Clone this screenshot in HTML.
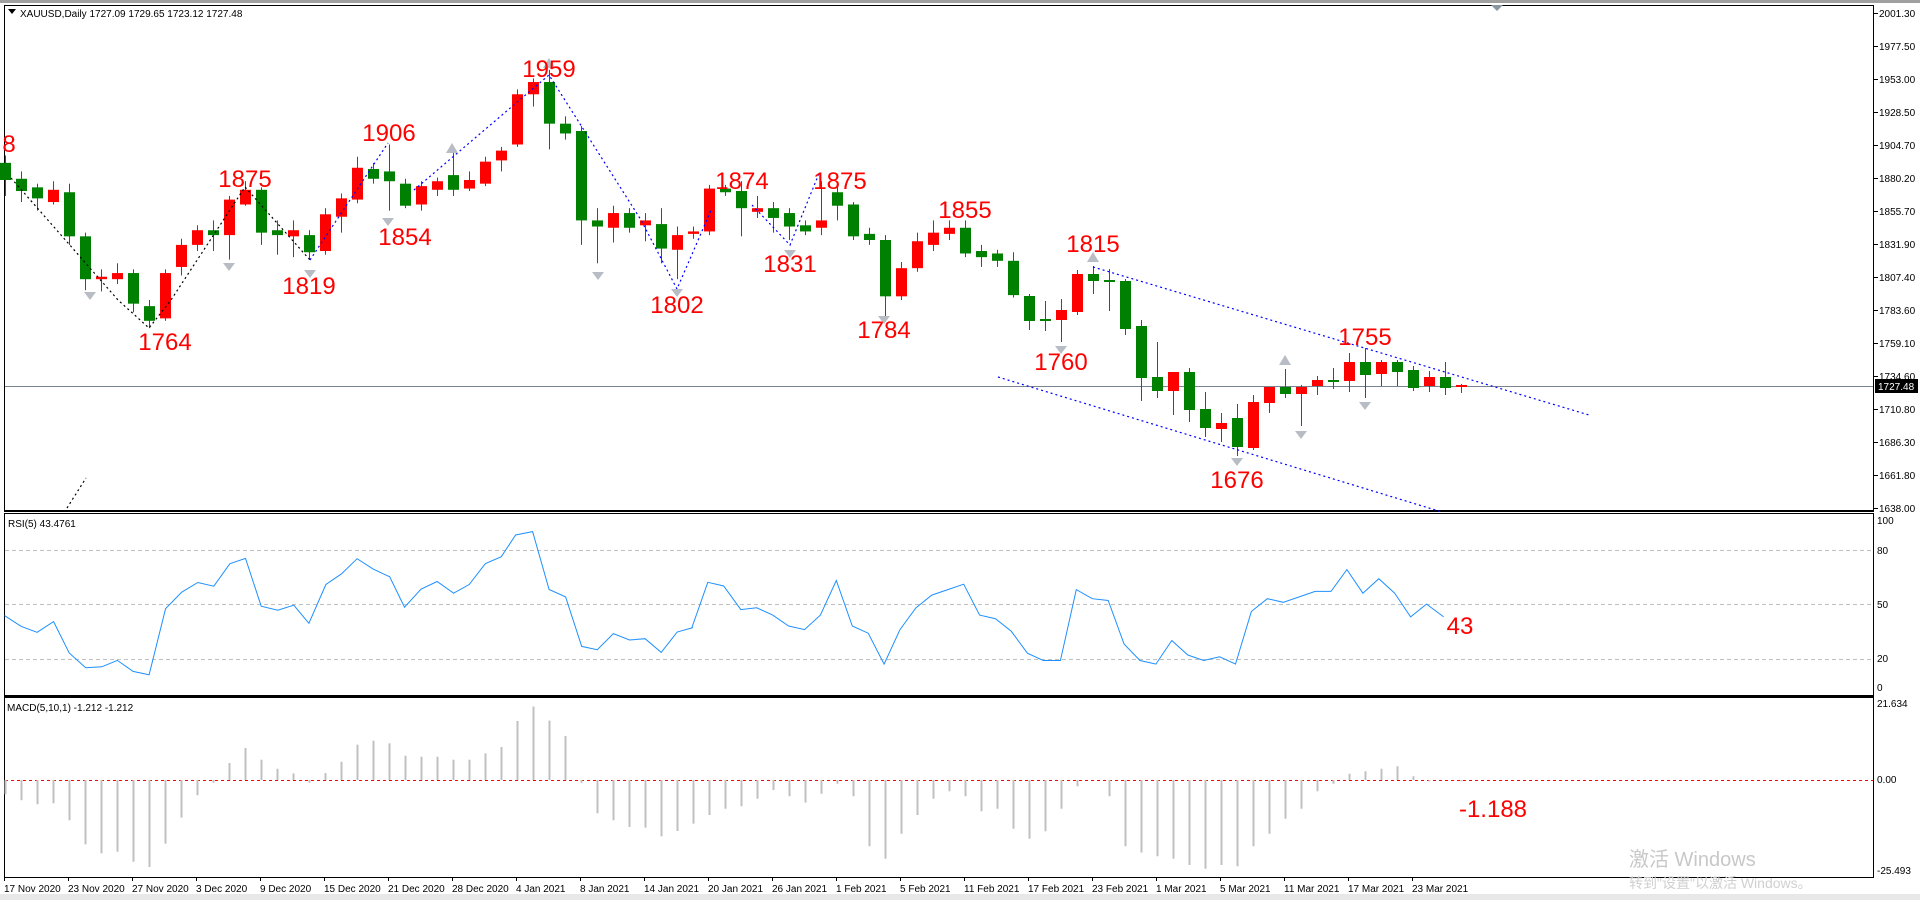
<!DOCTYPE html>
<html><head><meta charset="utf-8"><style>
html,body{margin:0;padding:0;width:1920px;height:900px;overflow:hidden;background:#fff}
svg{display:block}
.ax{font-family:"Liberation Sans",sans-serif;font-size:10px;fill:#000}
.lb{font-family:"Liberation Sans",sans-serif;font-size:24px;fill:#ff0000;text-anchor:middle}
</style></head><body>
<svg id="s" width="1920" height="900" viewBox="0 0 1920 900" xmlns="http://www.w3.org/2000/svg">
<rect x="0" y="0" width="1920" height="900" fill="#fff"/>
<rect x="0" y="0" width="1920" height="3" fill="#a0a0a0"/>
<rect x="0" y="894" width="1920" height="6" fill="#e8e8e8"/>
<rect x="4.5" y="5.5" width="1869" height="505" fill="none" stroke="#000" stroke-width="1"/>
<rect x="4.5" y="513.5" width="1869" height="182" fill="none" stroke="#000" stroke-width="1"/>
<rect x="4.5" y="697.5" width="1869" height="180" fill="none" stroke="#000" stroke-width="1"/>
<line x1="4" y1="511.5" x2="1874" y2="511.5" stroke="#000"/>
<line x1="4" y1="696.5" x2="1874" y2="696.5" stroke="#000"/>
<polygon points="1491,5 1503,5 1497,11" fill="#8a96a0"/>
<g stroke="#c0c0c0" stroke-dasharray="4,3">
<line x1="5" y1="550.5" x2="1873" y2="550.5"/><line x1="5" y1="604.5" x2="1873" y2="604.5"/><line x1="5" y1="659.5" x2="1873" y2="659.5"/></g>
<line x1="5" y1="780.5" x2="1873" y2="780.5" stroke="#ff0000" stroke-dasharray="3,3"/>
<line x1="5" y1="386.5" x2="1873" y2="386.5" stroke="#7a8490"/>
<g id="cand"></g>
<g id="mac"></g>
<polyline id="rsi" fill="none" stroke="#1e90ff" stroke-width="1"/>
<g fill="none" stroke-width="1.2" stroke-dasharray="2,3">
<polyline stroke="#000" points="11,178 118,300 149,328 171,300 245,187 310,260"/>
<polyline stroke="#0000ff" points="310,260 388,143"/>
<polyline stroke="#0000ff" points="414,190 549,75 641,220 677,289 712,208"/>
<polyline stroke="#0000ff" points="752,205 790,245 820,171"/>
<line stroke="#0000ff" x1="1093" y1="267" x2="1589" y2="415"/>
<line stroke="#0000ff" x1="998" y1="377" x2="1442" y2="512"/>
<line stroke="#000" x1="67" y1="508" x2="86" y2="478"/>
</g>
<g fill="#b8bcc4">
<polygon points="84,292 96,292 90,300"/><polygon points="223,263 235,263 229,271"/><polygon points="304,270 316,270 310,278"/><polygon points="382,218 394,218 388,226"/><polygon points="592,272 604,272 598,280"/><polygon points="671,289 683,289 677,297"/><polygon points="784,250 796,250 790,258"/><polygon points="878,316 890,316 884,324"/><polygon points="1055,346 1067,346 1061,354"/><polygon points="1231,458 1243,458 1237,466"/><polygon points="1295,431 1307,431 1301,439"/><polygon points="1359,402 1371,402 1365,410"/>
<polygon points="1093,252 1087,262 1099,262"/><polygon points="1285,355 1279,365 1291,365"/><polygon points="452,143 446,153 458,153"/><polygon points="549,58 543,68 555,68"/></g>
<text class="lb" x="9" y="152">8</text>
<text class="lb" x="245" y="187">1875</text>
<text class="lb" x="389" y="141">1906</text>
<text class="lb" x="549" y="77">1959</text>
<text class="lb" x="742" y="189">1874</text>
<text class="lb" x="840" y="189">1875</text>
<text class="lb" x="965" y="218">1855</text>
<text class="lb" x="1093" y="252">1815</text>
<text class="lb" x="1365" y="345">1755</text>
<text class="lb" x="165" y="350">1764</text>
<text class="lb" x="405" y="245">1854</text>
<text class="lb" x="309" y="294">1819</text>
<text class="lb" x="677" y="313">1802</text>
<text class="lb" x="790" y="272">1831</text>
<text class="lb" x="884" y="338">1784</text>
<text class="lb" x="1061" y="370">1760</text>
<text class="lb" x="1237" y="488">1676</text>
<text class="lb" x="1460" y="634">43</text>
<text class="lb" x="1493" y="817">-1.188</text>
<polygon points="8,9 16,9 12,14" fill="#000"/>
<text class="ax" x="20" y="17">XAUUSD,Daily  1727.09 1729.65 1723.12 1727.48</text>
<text class="ax" x="8" y="527">RSI(5) 43.4761</text>
<text class="ax" x="7" y="711">MACD(5,10,1) -1.212 -1.212</text>
<g class="ax">
<text x="1879" y="17">2001.30</text><text x="1879" y="50">1977.50</text><text x="1879" y="83">1953.00</text><text x="1879" y="116">1928.50</text><text x="1879" y="149">1904.70</text><text x="1879" y="182">1880.20</text><text x="1879" y="215">1855.70</text><text x="1879" y="248">1831.90</text><text x="1879" y="281">1807.40</text><text x="1879" y="314">1783.60</text><text x="1879" y="347">1759.10</text><text x="1879" y="380">1734.60</text><text x="1879" y="413">1710.80</text><text x="1879" y="446">1686.30</text><text x="1879" y="479">1661.80</text><text x="1879" y="512">1638.00</text>
<text x="1877" y="524">100</text><text x="1877" y="554">80</text><text x="1877" y="608">50</text><text x="1877" y="662">20</text><text x="1877" y="691">0</text>
<text x="1877" y="707">21.634</text><text x="1877" y="783">0.00</text><text x="1877" y="874">-25.493</text>
</g>
<g stroke="#000"><line x1="1874" y1="13.5" x2="1878" y2="13.5"/><line x1="1874" y1="46.5" x2="1878" y2="46.5"/><line x1="1874" y1="79.5" x2="1878" y2="79.5"/><line x1="1874" y1="112.5" x2="1878" y2="112.5"/><line x1="1874" y1="145.5" x2="1878" y2="145.5"/><line x1="1874" y1="178.5" x2="1878" y2="178.5"/><line x1="1874" y1="211.5" x2="1878" y2="211.5"/><line x1="1874" y1="244.5" x2="1878" y2="244.5"/><line x1="1874" y1="277.5" x2="1878" y2="277.5"/><line x1="1874" y1="310.5" x2="1878" y2="310.5"/><line x1="1874" y1="343.5" x2="1878" y2="343.5"/><line x1="1874" y1="376.5" x2="1878" y2="376.5"/><line x1="1874" y1="409.5" x2="1878" y2="409.5"/><line x1="1874" y1="442.5" x2="1878" y2="442.5"/><line x1="1874" y1="475.5" x2="1878" y2="475.5"/><line x1="1874" y1="508.5" x2="1878" y2="508.5"/></g>
<rect x="1875" y="379" width="43" height="14" fill="#000"/>
<text x="1878" y="390" class="ax" style="fill:#fff">1727.48</text>
<g class="ax">
<text x="4" y="892">17 Nov 2020</text><text x="68" y="892">23 Nov 2020</text><text x="132" y="892">27 Nov 2020</text><text x="196" y="892">3 Dec 2020</text><text x="260" y="892">9 Dec 2020</text><text x="324" y="892">15 Dec 2020</text><text x="388" y="892">21 Dec 2020</text><text x="452" y="892">28 Dec 2020</text><text x="516" y="892">4 Jan 2021</text><text x="580" y="892">8 Jan 2021</text><text x="644" y="892">14 Jan 2021</text><text x="708" y="892">20 Jan 2021</text><text x="772" y="892">26 Jan 2021</text><text x="836" y="892">1 Feb 2021</text><text x="900" y="892">5 Feb 2021</text><text x="964" y="892">11 Feb 2021</text><text x="1028" y="892">17 Feb 2021</text><text x="1092" y="892">23 Feb 2021</text><text x="1156" y="892">1 Mar 2021</text><text x="1220" y="892">5 Mar 2021</text><text x="1284" y="892">11 Mar 2021</text><text x="1348" y="892">17 Mar 2021</text><text x="1412" y="892">23 Mar 2021</text>
</g>
<g id="dt" stroke="#000"></g>
<text x="1629" y="866" style="font-family:'Liberation Sans','Noto Sans CJK SC',sans-serif;font-size:20px;fill:#c8c8c8">激活 Windows</text>
<text x="1629" y="888" style="font-family:'Liberation Sans','Noto Sans CJK SC',sans-serif;font-size:14px;fill:#d0d0d0">转到"设置"以激活 Windows。</text>
</svg>
<script>
var NS="http://www.w3.org/2000/svg";
function el(p,t,a){var e=document.createElementNS(NS,t);for(var k in a)e.setAttribute(k,a[k]);p.appendChild(e);return e;}
var G="#008000",R="#ff0000";
var A=[[133,147,127,160,G],[146,156,140,165,G],[153,162,150,172,G],[155,165,148,167,R],[157,193,150,200,G],[193,228,190,237,G],[226,228,220,238,R],[223,228,215,232,R],[223,248,220,255,G],[250,262,245,268,G],[223,260,220,262,R],[200,218,195,225,R],[188,200,184,205,R],[188,192,180,205,G],[163,192,160,212,R],[155,167,148,168,R],[155,190,153,200,G],[188,192,180,208,G],[188,193,180,210,R],[192,206,188,212,G],[175,205,170,208,R],[162,177,158,190,R],[137,163,128,166,R],[138,146,133,150,G],[140,148,118,172,G],[150,168,146,170,G],[152,167,148,172,R],[148,155,145,160,R],[143,155,124,160,G],[147,154,140,156,R],[132,150,128,152,R],[123,131,120,140,R],[77,118,73,120,R],[67,77,64,87,R],[67,101,57,122,G],[101,109,95,114,G],[107,180,103,200,G],[180,185,170,215,G],[174,186,168,198,R],[174,186,170,190,G],[180,184,174,197,R],[183,203,170,215,G],[192,204,185,228,R],[189,191,185,195,R],[154,189,151,192,R],[154,157,151,160,G],[156,170,148,193,G],[170,173,160,178,R],[170,178,165,190,G],[174,185,170,196,G],[184,189,180,192,G],[180,186,148,192,R],[157,168,151,180,G],[167,193,165,196,G],[191,196,186,200,G],[196,242,192,260,G],[219,242,214,245,R],[197,219,190,222,R],[190,200,180,205,R],[186,191,180,196,R],[186,207,180,210,G],[205,210,200,218,G],[207,213,204,218,G],[213,241,206,243,G]];
var B=[[296,321,294,330,G],[319,321,301,331,G],[310,320,299,342,R],[274,312,270,315,R],[274,281,266,294,G],[280,282,269,311,G],[281,329,279,335,G],[326,378,320,401,G],[377,391,342,398,G],[372,391,372,415,R],[372,410,368,422,G],[409,428,392,437,G],[423,429,413,442,R],[418,447,404,456,G],[402,448,395,450,R],[387,403,387,413,R],[387,394,369,398,G],[387,394,385,426,R],[380,386,376,395,R],[380,382,368,389,G],[362,381,353,392,R],[362,375,348,398,G],[362,374,360,386,R],[362,372,360,386,G],[370,388,366,391,G],[377,386,371,392,R],[377,388,362,395,G],[385,387,384,393,R]];
var k=1.2245,cg=document.getElementById("cand");
var C=A.map(function(c){return [c[0]*k,c[1]*k,c[2]*k,c[3]*k,c[4]];}).concat(B);
C.forEach(function(c,i){var x=5.5+16*i;
 el(cg,"rect",{x:x-0.5,y:c[2],width:1,height:c[3]-c[2],fill:c[4]});
 var h=Math.max(c[1]-c[0],1.5);
 el(cg,"rect",{x:x-5.5,y:c[0],width:11,height:h,fill:c[4]});});
var mz=[760,778,790,787,838,910,937,932,962,978,908,830,763,726,667,622,657,684,698,726,697,663,612,600,608,645,648,648,657,657,638,619,541,498,540,586,726,817,838,858,860,886,870,848];
var mp=[665,660,658,652,645,650,655,648,640,650,690,700,680,665,652,646,650,662,660,676,684,678,660,642,637,650,690,695,698,700,705,708,705,706,690,680,668,660,646,640,632,630,628,626,634,638,637,638];
var M=mz.map(function(z){return 540+z/2.99;}).concat(mp.map(function(p){return 780+(p-637)*1.25;}));
var mg=document.getElementById("mac");
M.forEach(function(y,i){var x=5.5+16*i;var t=Math.min(y,780),b=Math.max(y,780);if(b-t<1)return;
 el(mg,"rect",{x:x-1,y:t,width:2,height:b-t,fill:"#c0c0c0"});});
var rz=[[10,226],[47,258],[83,276],[120,244],[155,338],[192,382],[228,379],[263,360],[298,393],[334,403],[371,205],[407,156],[443,127],[479,138],[515,71],[550,55],[585,198],[622,210],[658,195],[692,249],[730,133],[765,101],[800,56],[836,87],[873,110],[906,201],[943,147],[979,124],[1016,159],[1051,133],[1087,71],[1123,50],[1155,-15],[1193,-25],[1230,148],[1267,170],[1303,318],[1338,328],[1374,280],[1410,299],[1445,295],[1481,336],[1517,275],[1552,262]];
var pts=rz.map(function(p){return (p[0]/2.24).toFixed(1)+","+(540+p[1]/2.99).toFixed(1);});
var rv=[[565,37],[578,62],[591,60],[605,47],[618,48],[631,44],[644,38],[657,36],[670,44],[683,63],[696,38],[709,34],[722,17],[735,36],[748,48],[761,55],[774,58],[787,61],[800,44],[813,42],[826,35],[839,23],[852,19],[866,19],[879,58],[892,53],[905,52],[918,28],[931,19],[944,17],[957,30],[970,22],[983,19],[996,21],[1009,17],[1022,46],[1035,53],[1048,51],[1061,54],[1074,57],[1087,57],[1100,69],[1113,56],[1126,64],[1139,56],[1152,43],[1165,50],[1179,43]];
rv.forEach(function(p){pts.push((p[0]*k).toFixed(1)+","+(695-p[1]*1.817).toFixed(1));});
document.getElementById("rsi").setAttribute("points",pts.join(" "));
var dg=document.getElementById("dt");
for(var i=0;i<23;i++){var x=4.5+64*i;el(dg,"line",{x1:x,y1:878,x2:x,y2:881});}
</script>
</body></html>
